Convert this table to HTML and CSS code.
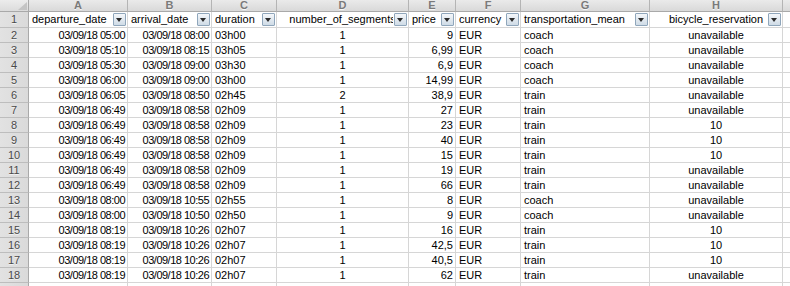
FILE: index.html
```html
<!DOCTYPE html>
<html>
<head>
<meta charset="utf-8">
<link rel="stylesheet" href="styles.css">
</head>
<body>
<div class="sheet">
  <div class="corner"><span class="tri"></span></div>
  <div class="ch">A</div><div class="ch">B</div><div class="ch">C</div><div class="ch">D</div><div class="ch">E</div><div class="ch">F</div><div class="ch">G</div><div class="ch">H</div><div class="ch last"></div>

  <div class="rh r1">1</div>
  <div class="c hd r1 l">departure_date<span class="fb"></span></div>
  <div class="c hd r1 l">arrival_date<span class="fb"></span></div>
  <div class="c hd r1 l">duration<span class="fb"></span></div>
  <div class="c hd r1 m">number_of_segments<span class="fb"></span></div>
  <div class="c hd r1 l">price<span class="fb"></span></div>
  <div class="c hd r1 l">currency<span class="fb"></span></div>
  <div class="c hd r1 l">transportation_mean<span class="fb"></span></div>
  <div class="c hd r1 m">bicycle_reservation<span class="fb"></span></div>
  <div class="c r1"></div>

  <div class="rh">2</div><div class="c r d">03/09/18 05:00</div><div class="c r d">03/09/18 08:00</div><div class="c l">03h00</div><div class="c m">1</div><div class="c r">9</div><div class="c l">EUR</div><div class="c l">coach</div><div class="c m">unavailable</div><div class="c"></div>
  <div class="rh">3</div><div class="c r d">03/09/18 05:10</div><div class="c r d">03/09/18 08:15</div><div class="c l">03h05</div><div class="c m">1</div><div class="c r">6,99</div><div class="c l">EUR</div><div class="c l">coach</div><div class="c m">unavailable</div><div class="c"></div>
  <div class="rh">4</div><div class="c r d">03/09/18 05:30</div><div class="c r d">03/09/18 09:00</div><div class="c l">03h30</div><div class="c m">1</div><div class="c r">6,9</div><div class="c l">EUR</div><div class="c l">coach</div><div class="c m">unavailable</div><div class="c"></div>
  <div class="rh">5</div><div class="c r d">03/09/18 06:00</div><div class="c r d">03/09/18 09:00</div><div class="c l">03h00</div><div class="c m">1</div><div class="c r">14,99</div><div class="c l">EUR</div><div class="c l">coach</div><div class="c m">unavailable</div><div class="c"></div>
  <div class="rh">6</div><div class="c r d">03/09/18 06:05</div><div class="c r d">03/09/18 08:50</div><div class="c l">02h45</div><div class="c m">2</div><div class="c r">38,9</div><div class="c l">EUR</div><div class="c l">train</div><div class="c m">unavailable</div><div class="c"></div>
  <div class="rh">7</div><div class="c r d">03/09/18 06:49</div><div class="c r d">03/09/18 08:58</div><div class="c l">02h09</div><div class="c m">1</div><div class="c r">27</div><div class="c l">EUR</div><div class="c l">train</div><div class="c m">unavailable</div><div class="c"></div>
  <div class="rh">8</div><div class="c r d">03/09/18 06:49</div><div class="c r d">03/09/18 08:58</div><div class="c l">02h09</div><div class="c m">1</div><div class="c r">23</div><div class="c l">EUR</div><div class="c l">train</div><div class="c m">10</div><div class="c"></div>
  <div class="rh">9</div><div class="c r d">03/09/18 06:49</div><div class="c r d">03/09/18 08:58</div><div class="c l">02h09</div><div class="c m">1</div><div class="c r">40</div><div class="c l">EUR</div><div class="c l">train</div><div class="c m">10</div><div class="c"></div>
  <div class="rh">10</div><div class="c r d">03/09/18 06:49</div><div class="c r d">03/09/18 08:58</div><div class="c l">02h09</div><div class="c m">1</div><div class="c r">15</div><div class="c l">EUR</div><div class="c l">train</div><div class="c m">10</div><div class="c"></div>
  <div class="rh">11</div><div class="c r d">03/09/18 06:49</div><div class="c r d">03/09/18 08:58</div><div class="c l">02h09</div><div class="c m">1</div><div class="c r">19</div><div class="c l">EUR</div><div class="c l">train</div><div class="c m">unavailable</div><div class="c"></div>
  <div class="rh">12</div><div class="c r d">03/09/18 06:49</div><div class="c r d">03/09/18 08:58</div><div class="c l">02h09</div><div class="c m">1</div><div class="c r">66</div><div class="c l">EUR</div><div class="c l">train</div><div class="c m">unavailable</div><div class="c"></div>
  <div class="rh">13</div><div class="c r d">03/09/18 08:00</div><div class="c r d">03/09/18 10:55</div><div class="c l">02h55</div><div class="c m">1</div><div class="c r">8</div><div class="c l">EUR</div><div class="c l">coach</div><div class="c m">unavailable</div><div class="c"></div>
  <div class="rh">14</div><div class="c r d">03/09/18 08:00</div><div class="c r d">03/09/18 10:50</div><div class="c l">02h50</div><div class="c m">1</div><div class="c r">9</div><div class="c l">EUR</div><div class="c l">coach</div><div class="c m">unavailable</div><div class="c"></div>
  <div class="rh">15</div><div class="c r d">03/09/18 08:19</div><div class="c r d">03/09/18 10:26</div><div class="c l">02h07</div><div class="c m">1</div><div class="c r">16</div><div class="c l">EUR</div><div class="c l">train</div><div class="c m">10</div><div class="c"></div>
  <div class="rh">16</div><div class="c r d">03/09/18 08:19</div><div class="c r d">03/09/18 10:26</div><div class="c l">02h07</div><div class="c m">1</div><div class="c r">42,5</div><div class="c l">EUR</div><div class="c l">train</div><div class="c m">10</div><div class="c"></div>
  <div class="rh">17</div><div class="c r d">03/09/18 08:19</div><div class="c r d">03/09/18 10:26</div><div class="c l">02h07</div><div class="c m">1</div><div class="c r">40,5</div><div class="c l">EUR</div><div class="c l">train</div><div class="c m">10</div><div class="c"></div>
  <div class="rh">18</div><div class="c r d">03/09/18 08:19</div><div class="c r d">03/09/18 10:26</div><div class="c l">02h07</div><div class="c m">1</div><div class="c r">62</div><div class="c l">EUR</div><div class="c l">train</div><div class="c m">unavailable</div><div class="c"></div>
  <div class="rh"></div><div class="c"></div><div class="c"></div><div class="c"></div><div class="c"></div><div class="c"></div><div class="c"></div><div class="c"></div><div class="c"></div><div class="c"></div>
</div>
</body>
</html>
```

FILE: styles.css
```css
html, body {
  margin: 0;
  padding: 0;
  background: #ffffff;
  overflow: hidden;
}

.sheet {
  display: grid;
  grid-template-columns: 29px 99px 84px 65px 132px 47px 65px 129px 133px 40px;
  grid-template-rows: 12px 16px repeat(18, 15px);
  font-family: "Liberation Sans", Arial, sans-serif;
  font-size: 11px;
  color: #000;
  width: 790px;
  height: 286px;
  overflow: hidden;
}

.corner {
  position: relative;
  background: linear-gradient(#ececec, #dcdcdc);
  border-right: 1px solid #a9a9a9;
  border-bottom: 1px solid #a9a9a9;
  box-sizing: border-box;
}

.corner .tri {
  position: absolute;
  right: 1px;
  bottom: 1px;
  width: 0;
  height: 0;
  border-left: 9px solid transparent;
  border-bottom: 8px solid #c4c4c4;
}

.ch {
  background: linear-gradient(#eaeaea, #d9d9d9);
  border-right: 1px solid #b4b4b4;
  border-bottom: 1px solid #a9a9a9;
  box-sizing: border-box;
  text-align: center;
  font-size: 11px;
  line-height: 11px;
  font-weight: bold;
  color: #7a7a7a;
  text-shadow: 0 1px 0 #f6f6f6;
}

.ch.last {
  border-right: none;
}

.rh {
  background: linear-gradient(90deg, #e2e2e2, #dadada);
  border-right: 1px solid #a9a9a9;
  border-bottom: 1px solid #bdbdbd;
  box-sizing: border-box;
  text-align: center;
  line-height: 14px;
  font-size: 11px;
  color: #4a4a4a;
  text-shadow: 0 1px 0 #f2f2f2;
}

.rh.r1 {
  line-height: 15px;
}

.c {
  position: relative;
  border-right: 1px solid #d6d6d6;
  border-bottom: 1px solid #d6d6d6;
  box-sizing: border-box;
  line-height: 14px;
  white-space: nowrap;
  overflow: hidden;
  padding: 0 2px 0 3px;
}

.c.r1 {
  line-height: 15px;
}

.c.l { text-align: left; }
.c.r { text-align: right; }
.c.m { text-align: center; padding: 0; }
.c.d { letter-spacing: -0.5px; }
.c.hd.m { padding-right: 0; }

.fb {
  position: absolute;
  right: 1px;
  top: 1px;
  width: 11px;
  height: 11px;
  border: 1px solid #8fa6bb;
  border-radius: 1px;
  background: linear-gradient(#f4f7fa, #cfdbe6);
  box-shadow: -1px 0 0 #ffffff;
}

.fb::after {
  content: "";
  position: absolute;
  left: 2px;
  top: 4px;
  width: 0;
  height: 0;
  border-left: 3.5px solid transparent;
  border-right: 3.5px solid transparent;
  border-top: 4px solid #2b2b2b;
}
```
